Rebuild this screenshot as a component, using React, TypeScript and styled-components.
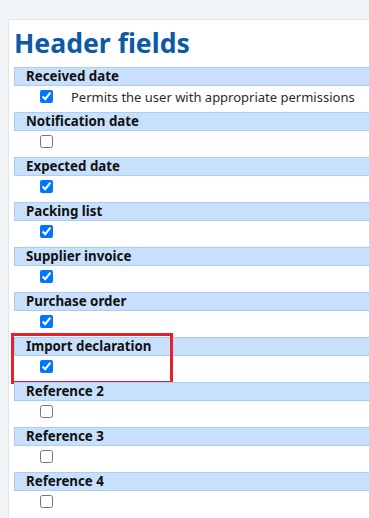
import React from "react";
import styled, { createGlobalStyle } from "styled-components";

const Global = createGlobalStyle`
  html, body { margin: 0; padding: 0; }
  body {
    background: #f1f4f7;
    font-family: "Noto Sans", "DejaVu Sans", sans-serif;
    overflow: hidden;
    width: 369px;
    height: 518px;
  }
`;

const Page = styled.div`
  padding: 19px 0 0 8px;
  width: 361px;
  height: 499px;
  overflow: hidden;
`;

const Panel = styled.div`
  background: #ffffff;
  border-top: 1px solid #e2e5e9;
  border-left: 1px solid #e2e5e9;
  padding: 6px 0 0 5px;
  width: 560px;
  min-height: 520px;
`;

const Title = styled.h1`
  margin: 0 0 7px 0;
  font-size: 26.6px;
  line-height: 34px;
  font-weight: 700;
  color: #0c5aa6;
`;

const List = styled.div`
  display: flex;
  flex-direction: column;
`;

const Section = styled.div`
  position: relative;
  display: flex;
  flex-direction: column;
`;

const FieldHeader = styled.div`
  height: 17px;
  background: #c8e0fc;
  border: 1px solid #a9cdf5;
  padding-left: 11px;
  font-size: 13.3px;
  line-height: 17px;
  font-weight: 700;
  color: #111;
`;

const ValueRow = styled.div`
  height: 26px;
  display: grid;
  grid-template-columns: 57px 1fr;
  align-items: start;
`;

const CheckCell = styled.div`
  display: flex;
  padding: 4px 0 0 26px;
`;

const Check = styled.input`
  margin: 0;
  width: 13px;
  height: 13px;
  accent-color: #0075ff;
`;

const Description = styled.div`
  font-size: 13px;
  line-height: 18px;
  padding-top: 2px;
  color: #2a2a33;
  white-space: nowrap;
`;

const Highlight = styled.div`
  position: absolute;
  left: -3px;
  top: -4px;
  width: 156px;
  height: 45px;
  border: 3px solid #e8202a;
  pointer-events: none;
`;

type Field = { name: string; checked: boolean; desc?: string; highlight?: boolean };

const fields: Field[] = [
  { name: "Received date", checked: true, desc: "Permits the user with appropriate permissions" },
  { name: "Notification date", checked: false },
  { name: "Expected date", checked: true },
  { name: "Packing list", checked: true },
  { name: "Supplier invoice", checked: true },
  { name: "Purchase order", checked: true },
  { name: "Import declaration", checked: true, highlight: true },
  { name: "Reference 2", checked: false },
  { name: "Reference 3", checked: false },
  { name: "Reference 4", checked: false },
];

export default function App() {
  return (
    <>
      <Global />
      <Page>
        <Panel>
          <Title>Header fields</Title>
          <List>
            {fields.map((f) => (
              <Section key={f.name}>
                <FieldHeader>{f.name}</FieldHeader>
                <ValueRow>
                  <CheckCell>
                    <Check type="checkbox" defaultChecked={f.checked} />
                  </CheckCell>
                  <Description>{f.desc ?? ""}</Description>
                </ValueRow>
                {f.highlight && <Highlight />}
              </Section>
            ))}
          </List>
        </Panel>
      </Page>
    </>
  );
}
